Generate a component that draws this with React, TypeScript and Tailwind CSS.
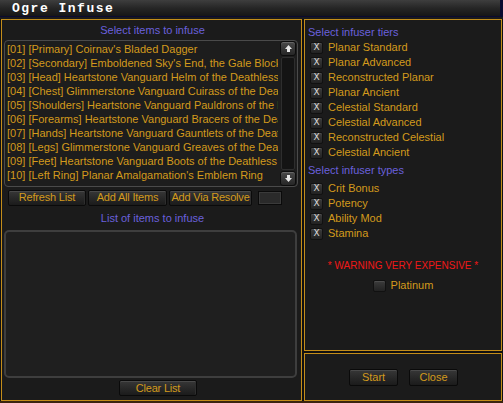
import React from "react";

const items = [
  "[01] [Primary] Coirnav's Bladed Dagger",
  "[02] [Secondary] Emboldened Sky's End, the Gale Blocker",
  "[03] [Head] Heartstone Vanguard Helm of the Deathless",
  "[04] [Chest] Glimmerstone Vanguard Cuirass of the Deathless",
  "[05] [Shoulders] Heartstone Vanguard Pauldrons of the Deathless",
  "[06] [Forearms] Heartstone Vanguard Bracers of the Deathless",
  "[07] [Hands] Heartstone Vanguard Gauntlets of the Deathless",
  "[08] [Legs] Glimmerstone Vanguard Greaves of the Deathless",
  "[09] [Feet] Heartstone Vanguard Boots of the Deathless",
  "[10] [Left Ring] Planar Amalgamation's Emblem Ring",
];

const tiers = [
  "Planar Standard",
  "Planar Advanced",
  "Reconstructed Planar",
  "Planar Ancient",
  "Celestial Standard",
  "Celestial Advanced",
  "Reconstructed Celestial",
  "Celestial Ancient",
];

const types = ["Crit Bonus", "Potency", "Ability Mod", "Stamina"];

function Btn({ label, w }: { label: string; w: string }) {
  return (
    <div
      className={`${w} h-[16px] flex items-center justify-center whitespace-nowrap overflow-hidden rounded-[2px] border border-[#0a0a0a] bg-linear-to-b from-[#373737] to-[#1b1b1b] shadow-[inset_0_1px_0_#4a4a4a,inset_-1px_0_0_#2e2e2e] text-[#d39a1c] text-[11px] tracking-[-0.2px] leading-none`}
    >
      {label}
    </div>
  );
}

function Check({ checked }: { checked: boolean }) {
  return (
    <div className="w-[13px] h-[12px] shrink-0 rounded-[2px] border border-[#111] bg-linear-to-b from-[#3c3c3c] to-[#222] shadow-[inset_0_1px_0_#4c4c4c] flex items-center justify-center text-[#d8d8d8] text-[9px] leading-none font-['DejaVu_Sans',sans-serif]">
      {checked ? "X" : ""}
    </div>
  );
}

function Row({ label }: { label: string }) {
  return (
    <div className="h-[15px] flex items-center pl-[5px]">
      <Check checked />
      <span className="ml-[5px] text-[#d39a1c] text-[11px] leading-none whitespace-nowrap">{label}</span>
    </div>
  );
}

function ScrollBtn({ up }: { up: boolean }) {
  return (
    <div className="h-[15px] w-full rounded-[3px] border border-[#0c0c0c] bg-linear-to-b from-[#4a4a4a] to-[#262626] shadow-[inset_0_1px_0_#666] flex items-center justify-center">
      <svg width="9" height="9" viewBox="0 0 9 9">
        {up ? (
          <path d="M4.5 1 L8 5 L6 5 L6 8 L3 8 L3 5 L1 5 Z" fill="#e6e6e6" />
        ) : (
          <path d="M4.5 8 L8 4 L6 4 L6 1 L3 1 L3 4 L1 4 Z" fill="#e6e6e6" />
        )}
      </svg>
    </div>
  );
}

export default function App() {
  return (
    <div className="w-[503px] h-[403px] overflow-hidden bg-[#101010] flex flex-col font-['Liberation_Sans',Arial,sans-serif]">
      {/* title bar */}
      <div className="flex h-[17px] bg-[#0a0a30]">
        <div className="w-[500px] h-[16px] bg-linear-to-b from-[#3e3e3e] via-[#262626] to-[#161616] flex items-center pl-[12px]">
          <span className="text-white text-[13px] font-bold tracking-[1.5px] leading-none font-['Liberation_Mono',monospace]">
            Ogre Infuse
          </span>
        </div>
      </div>
      <div className="h-[2px] bg-[#1a1a1a]" />

      {/* body */}
      <div className="flex pl-[1px] gap-[1px] h-[382px]">
        {/* left panel */}
        <div className="w-[301px] h-full border border-[#c38d1a] bg-[#1b1b1b] flex flex-col pl-[2px]">
          <div className="h-[20px] flex items-center justify-center pt-[1px] text-[#6a60dc] text-[11px] leading-none">
            Select items to infuse
          </div>
          <div className="w-[294px] h-[147px] rounded-[4px] border border-[#4a4a4a] bg-[#1d1d1d] flex">
            <div className="flex-1 overflow-hidden pl-[2px] pt-[1px]">
              {items.map((t) => (
                <div key={t} className="h-[14px] leading-[14px] text-[11px] text-[#d39a1c] whitespace-nowrap overflow-hidden w-[271px]">
                  {t}
                </div>
              ))}
            </div>
            <div className="w-[16px] mr-[1px] flex flex-col">
              <ScrollBtn up />
              <div className="flex-1 mx-[1px] my-[1px] border border-[#2e2e2e] rounded-[2px] bg-[#141414]" />
              <ScrollBtn up={false} />
            </div>
          </div>
          <div className="flex items-center mt-[2px] ml-[4px] h-[17px]">
            <Btn label="Refresh List" w="w-[78px]" />
            <div className="w-[2px]" />
            <Btn label="Add All Items" w="w-[79px]" />
            <div className="w-[2px]" />
            <Btn label="Add Via Resolve" w="w-[83px]" />
            <div className="ml-[6px] w-[24px] h-[14px] border border-[#0a0a0a] bg-[#2a2a2a] shadow-[inset_0_0_0_1px_#3a3a3a]" />
          </div>
          <div className="h-[24px] flex items-center justify-center text-[#6a60dc] text-[11px] leading-none">
            List of items to infuse
          </div>
          <div className="w-[293px] h-[148px] rounded-[5px] border-2 border-[#3e3e3e] bg-[#1f1f1f]" />
          <div className="mt-[2px] ml-[115px]">
            <Btn label="Clear List" w="w-[78px]" />
          </div>
        </div>

        {/* right column */}
        <div className="w-[198px] h-full flex flex-col gap-[2px] ml-[1px]">
          <div className="h-[332px] border border-[#c38d1a] bg-[#1b1b1b] flex flex-col">
            <div className="h-[20px] flex items-center pl-[3px] pt-[4px] text-[#6a60dc] text-[11px] leading-none">
              Select infuser tiers
            </div>
            {tiers.map((t) => (
              <Row key={t} label={t} />
            ))}
            <div className="h-[21px] flex items-center pl-[3px] text-[#6a60dc] text-[11px] leading-none">
              Select infuser types
            </div>
            {types.map((t) => (
              <Row key={t} label={t} />
            ))}
            <div className="mt-[18px] h-[14px] flex items-center justify-center text-[#f01818] text-[10px] leading-none">
              * WARNING VERY EXPENSIVE *
            </div>
            <div className="mt-[5px] h-[15px] flex items-center justify-center">
              <Check checked={false} />
              <span className="ml-[5px] text-[#d39a1c] text-[11px] leading-none">Platinum</span>
            </div>
          </div>
          <div className="h-[48px] border border-[#c38d1a] bg-[#1b1b1b] flex items-start pt-[15px] pl-[44px] gap-[11px]">
            <div className="h-[17px] w-[49px] flex items-center justify-center rounded-[2px] border border-[#0a0a0a] bg-linear-to-b from-[#373737] to-[#1b1b1b] shadow-[inset_0_1px_0_#4a4a4a] text-[#d39a1c] text-[11px] leading-none">
              Start
            </div>
            <div className="h-[17px] w-[49px] flex items-center justify-center rounded-[2px] border border-[#0a0a0a] bg-linear-to-b from-[#373737] to-[#1b1b1b] shadow-[inset_0_1px_0_#4a4a4a] text-[#d39a1c] text-[11px] leading-none">
              Close
            </div>
          </div>
        </div>
      </div>
      <div className="flex-1 bg-[#3a2410]" />
    </div>
  );
}
